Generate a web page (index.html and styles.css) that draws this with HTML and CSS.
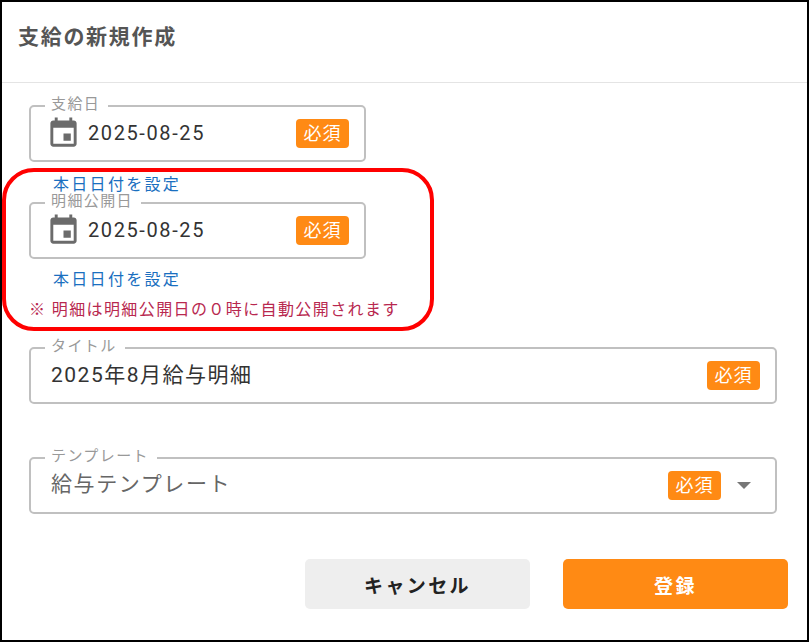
FILE: index.html
```html
<!DOCTYPE html>
<html lang="ja">
<head>
  <meta charset="UTF-8">
  <title>支給の新規作成</title>
  <link rel="stylesheet" href="styles.css">
</head>
<body>

  <div class="dialog">
    <h1 class="dialog-title">支給の新規作成</h1>

    <div class="dialog-body">
      <!-- 支給日 -->
      <div class="date-group first">
        <fieldset class="field field-date">
          <legend>支給日</legend>
          <svg class="cal-icon" viewBox="0 0 24 24"><path d="M17 12h-5v5h5v-5zM16 1v2H8V1H6v2H5c-1.11 0-1.99.9-1.99 2L3 19c0 1.1.89 2 2 2h14c1.1 0 2-.9 2-2V5c0-1.1-.9-2-2-2h-1V1h-2zm3 18H5V8h14v11z"/></svg>
          <span class="value date-value">2025-08-25</span>
          <span class="badge">必須</span>
        </fieldset>
        <a class="today-link">本日日付を設定</a>
      </div>

      <!-- 明細公開日 -->
      <div class="date-group second">
        <fieldset class="field field-date">
          <legend>明細公開日</legend>
          <svg class="cal-icon" viewBox="0 0 24 24"><path d="M17 12h-5v5h5v-5zM16 1v2H8V1H6v2H5c-1.11 0-1.99.9-1.99 2L3 19c0 1.1.89 2 2 2h14c1.1 0 2-.9 2-2V5c0-1.1-.9-2-2-2h-1V1h-2zm3 18H5V8h14v11z"/></svg>
          <span class="value date-value">2025-08-25</span>
          <span class="badge">必須</span>
        </fieldset>
        <a class="today-link">本日日付を設定</a>
        <p class="note">※ 明細は明細公開日の０時に自動公開されます</p>
      </div>

      <fieldset class="field field-wide title-field">
        <legend>タイトル</legend>
        <span class="value">2025年8月給与明細</span>
        <span class="badge">必須</span>
      </fieldset>

      <fieldset class="field field-wide template-field">
        <legend>テンプレート</legend>
        <span class="value value-select">給与テンプレート</span>
        <span class="badge">必須</span>
        <span class="arrow"></span>
      </fieldset>

      <div class="actions">
        <button class="btn btn-cancel">キャンセル</button>
        <button class="btn btn-submit">登録</button>
      </div>
    </div>

    <!-- red callout drawn over the form -->
    <div class="callout"></div>
  </div>

</body>
</html>
```

FILE: styles.css
```css
/* General */
html, body {
  margin: 0;
  height: 100%;
}

body {
  font-family: Roboto, "Noto Sans CJK JP", sans-serif;
  background: #fff;
}

.dialog {
  position: relative;
  box-sizing: border-box;
  width: 809px;
  height: 642px;
  border: 2px solid #000;
  background: #fff;
}

.dialog-title {
  box-sizing: border-box;
  height: 81px;
  margin: 0;
  padding: 22px 0 0 16px;
  font-size: 21px;
  line-height: 26px;
  letter-spacing: 1.7px;
  font-weight: 700;
  color: #555;
  border-bottom: 1px solid #e4e4e4;
}

.dialog-body {
  padding: 0 19px 0 27px;
}

/* Fields */
.field {
  box-sizing: border-box;
  display: flex;
  align-items: center;
  min-width: 0;
  margin: 0;
  padding: 0 15px 8px 14px;
  border: 2px solid #c0c0c0;
  border-radius: 5px;
}

.field legend {
  padding: 0 8px 4px 6px; /* bottom padding lifts the label above the border line */
  font-size: 15px;
  line-height: 14px;
  letter-spacing: 1.4px;
  color: #999;
}

.field-date {
  width: 337px;
  height: 65px;
}

.field-wide {
  width: 748px;
  height: 65px;
}

.cal-icon {
  flex: none;
  width: 35px;
  height: 35px;
  margin: 0 7px 0 1px;
  fill: #6b6b6b;
}

.value {
  flex: 1;
  margin-bottom: 6px;
  font-size: 21px;
  letter-spacing: 1.5px;
  color: #333;
}

.field-wide .value {
  margin-left: 6px;
}

.date-value {
  margin-bottom: 2px;
  font-size: 20px;
  letter-spacing: 1.6px;
}

.field-wide .value-select {
  margin-bottom: 7px;
  color: #666;
  letter-spacing: 1.6px;
}

.badge {
  flex: none;
  width: 53px;
  height: 29px;
  line-height: 29px;
  text-align: center;
  font-size: 18px;
  letter-spacing: 1px;
  color: #fff;
  background: #ff8a14;
  border-radius: 4px;
}

.arrow {
  flex: none;
  width: 0;
  height: 0;
  margin: 0 9px 0 16px;
  border-left: 7px solid transparent;
  border-right: 7px solid transparent;
  border-top: 7px solid #777;
}

/* Date groups */
.date-group.first {
  margin-top: 14px;
  height: 97px;
}

.today-link {
  display: block;
  margin: 13px 0 0 24px;
  font-size: 16px;
  line-height: 20px;
  letter-spacing: 2.3px;
  color: #1a6fc0;
}

.second .today-link {
  margin-top: 11px;
}

.note {
  margin: 9px 0 0 0;
  font-size: 16px;
  line-height: 21px;
  letter-spacing: 1.4px;
  color: #b8284f;
}

.title-field {
  margin-top: 19px;
}

.template-field {
  margin-top: 45px;
}

/* Buttons */
.actions {
  display: flex;
  justify-content: flex-end;
  gap: 33px;
  margin-top: 45px;
}

.btn {
  width: 225px;
  height: 50px;
  border: none;
  border-radius: 5px;
  font-family: inherit;
  font-size: 19px;
  font-weight: 700;
  letter-spacing: 2.4px;
}

.btn-cancel {
  background: #eee;
  color: #222;
}

.btn-submit {
  background: #ff8a14;
  color: #fff;
}

/* Red callout */
.callout {
  position: absolute;
  left: 0;
  top: 166px;
  width: 424px;
  height: 155px;
  border: 4px solid #f00;
  border-radius: 32px;
}
```
